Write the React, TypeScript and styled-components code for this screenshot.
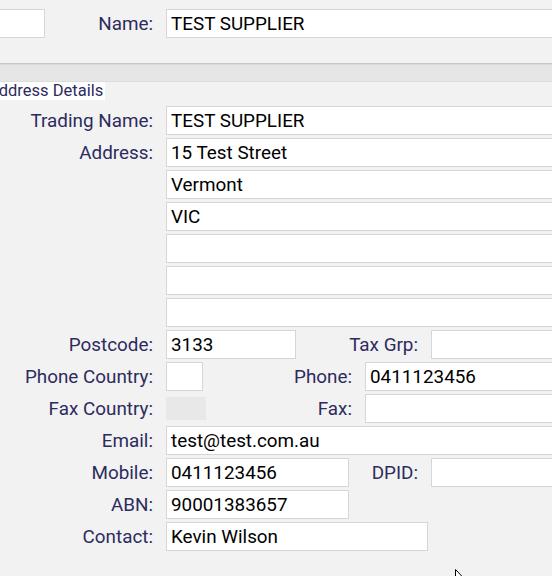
import styled, { createGlobalStyle } from 'styled-components';

const GlobalStyle = createGlobalStyle`
  html, body {
    margin: 0;
    padding: 0;
    background: #f2f2f2;
    overflow: hidden;
  }
  body {
    font-family: Roboto, "Liberation Sans", sans-serif;
  }
`;

const navy = '#2d2b5e';

type Field = { label: string; value?: string; width?: number; labelWidth?: number; disabled?: boolean };
type RowData = { label?: string; value?: string; width?: number; disabled?: boolean; extra?: Field };

const rows: RowData[] = [
  { label: 'Trading Name:', value: 'TEST SUPPLIER' },
  { label: 'Address:', value: '15 Test Street' },
  { value: 'Vermont' },
  { value: 'VIC' },
  { value: '' },
  { value: '' },
  { value: '' },
  { label: 'Postcode:', value: '3133', width: 130, extra: { label: 'Tax Grp:', labelWidth: 109 } },
  { label: 'Phone Country:', value: '', width: 37, extra: { label: 'Phone:', value: '0411123456', labelWidth: 136 } },
  { label: 'Fax Country:', width: 40, disabled: true, extra: { label: 'Fax:', labelWidth: 133 } },
  { label: 'Email:', value: 'test@test.com.au' },
  { label: 'Mobile:', value: '0411123456', width: 183, extra: { label: 'DPID:', labelWidth: 56 } },
  { label: 'ABN:', value: '90001383657', width: 183 },
  { label: 'Contact:', value: 'Kevin Wilson', width: 262 },
];

const App = () => {
  return (
    <Page>
      <GlobalStyle />
      <Header>
        <Row>
          <StubInput />
          <Label width={108}>Name:</Label>
          <Input>TEST SUPPLIER</Input>
        </Row>
      </Header>
      <Divider />
      <Section>
        <Legend>Address Details</Legend>
        <Form>
          {rows.map((r, i) => (
            <Row key={i}>
              <Label width={153}>{r.label}</Label>
              {r.disabled ? <DisabledBox /> : <Input width={r.width}>{r.value}</Input>}
              {r.extra && (
                <>
                  <Label width={r.extra.labelWidth}>{r.extra.label}</Label>
                  <Input>{r.extra.value}</Input>
                </>
              )}
            </Row>
          ))}
        </Form>
      </Section>
      <Cursor width="12" height="19" viewBox="0 0 12 19">
        <path d="M0.5 0.5 L0.5 16 L4 12.5 L6.5 18 L8.5 17 L6 11.5 L11 11.5 Z" fill="#fff" stroke="#000" strokeWidth="1" />
      </Cursor>
    </Page>
  );
};

export default App;

const Page = styled.div`
  position: relative;
  width: 560px;
  height: 576px;
  background: #f2f2f2;
`;

const Header = styled.div`
  height: 63px;
  padding-top: 9px;
  box-sizing: border-box;
`;

const Divider = styled.div`
  height: 17px;
  background: #e6e6e6;
  border-top: 1px solid #c8c8c8;
  border-bottom: 1px solid #dcdce0;
  box-shadow: inset 0 1px 1px rgba(0, 0, 0, 0.06);
`;

const Section = styled.div`
  display: flex;
  flex-direction: column;
  gap: 6px;
`;

const Legend = styled.div`
  align-self: flex-start;
  margin-left: -12px;
  padding: 0 2px 0 0;
  height: 18px;
  line-height: 18px;
  background: #fff;
  color: ${navy};
  font-size: 16.5px;
`;

const Form = styled.div`
  display: flex;
  flex-direction: column;
  gap: 3px;
`;

const Row = styled.div`
  display: flex;
  align-items: center;
  gap: 13px;
  height: 29px;
`;

const Label = styled.div<{ width?: number }>`
  flex: none;
  width: ${({ width }) => width ?? 153}px;
  text-align: right;
  color: ${navy};
  font-size: 18.85px;
  white-space: nowrap;
`;

const Input = styled.div<{ width?: number }>`
  box-sizing: border-box;
  height: 29px;
  ${({ width }) => (width ? `width: ${width}px; flex: none;` : 'flex: 1;')}
  background: #fff;
  border: 1px solid #d6d6d6;
  padding: 0 4px;
  display: flex;
  align-items: center;
  font-size: 18.85px;
  color: #000;
  white-space: nowrap;
  overflow: hidden;
`;

const StubInput = styled(Input)`
  flex: none;
  width: 55px;
  margin-left: -10px;
  margin-right: -13px;
`;

const DisabledBox = styled.div`
  flex: none;
  width: 40px;
  height: 23px;
  background: #e8e8e8;
`;

const Cursor = styled.svg`
  position: absolute;
  left: 455px;
  top: 569px;
`;
